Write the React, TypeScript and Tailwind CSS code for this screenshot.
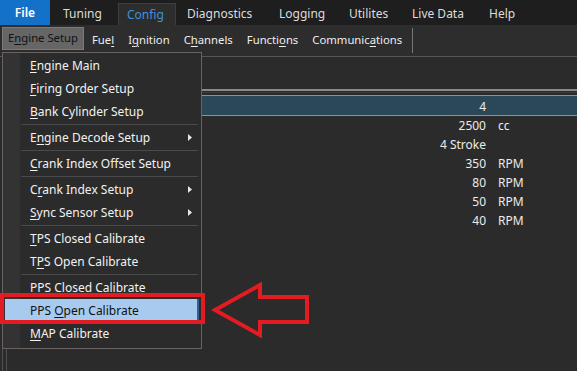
import React from 'react';

type MenuEntry =
  | { kind: 'item'; pre: string; key: string; post: string; sub?: boolean; active?: boolean }
  | { kind: 'sep' };

const menuEntries: MenuEntry[] = [
  { kind: 'item', pre: '', key: 'E', post: 'ngine Main' },
  { kind: 'item', pre: '', key: 'F', post: 'iring Order Setup' },
  { kind: 'item', pre: '', key: 'B', post: 'ank Cylinder Setup' },
  { kind: 'sep' },
  { kind: 'item', pre: 'E', key: 'n', post: 'gine Decode Setup', sub: true },
  { kind: 'sep' },
  { kind: 'item', pre: '', key: 'C', post: 'rank Index Offset Setup' },
  { kind: 'sep' },
  { kind: 'item', pre: 'C', key: 'r', post: 'ank Index Setup', sub: true },
  { kind: 'item', pre: '', key: 'S', post: 'ync Sensor Setup', sub: true },
  { kind: 'sep' },
  { kind: 'item', pre: '', key: 'T', post: 'PS Closed Calibrate' },
  { kind: 'item', pre: 'T', key: 'P', post: 'S Open Calibrate' },
  { kind: 'sep' },
  { kind: 'item', pre: 'PPS C', key: 'l', post: 'osed Calibrate' },
  { kind: 'item', pre: 'PPS ', key: 'O', post: 'pen Calibrate', active: true },
  { kind: 'item', pre: '', key: 'M', post: 'AP Calibrate' },
];

const topMenu = [
  { label: 'Tuning', cls: 'w-[68px] pl-[13px]' },
  { label: 'Config', cls: 'w-[58px] pl-[8px]', active: true },
  { label: 'Diagnostics', cls: 'w-[92px] pl-[11px]' },
  { label: 'Logging', cls: 'w-[70px] pl-[11px]' },
  { label: 'Utilites', cls: 'w-[63px] pl-[11px]' },
  { label: 'Live Data', cls: 'w-[77px] pl-[11px]' },
  { label: 'Help', cls: 'w-[60px] pl-[11px]' },
];

const subMenu = [
  { pre: 'E', key: 'n', post: 'gine Setup', active: true },
  { pre: 'Fue', key: 'l', post: '' },
  { pre: 'I', key: 'g', post: 'nition' },
  { pre: 'C', key: 'h', post: 'annels' },
  { pre: 'Functi', key: 'o', post: 'ns' },
  { pre: 'Communic', key: 'a', post: 'tions' },
];

const rows = [
  { value: '2500', unit: 'cc' },
  { value: '4 Stroke', unit: '' },
  { value: '350', unit: 'RPM' },
  { value: '80', unit: 'RPM' },
  { value: '50', unit: 'RPM' },
  { value: '40', unit: 'RPM' },
];

function Mnemonic({ pre, k, post }: { pre: string; k: string; post: string }) {
  return (
    <span>
      {pre}
      <span className="underline underline-offset-2 decoration-1">{k}</span>
      {post}
    </span>
  );
}

function EngineMenu() {
  return (
    <div className="absolute left-[2px] top-[52px] w-[200px] h-[297px] bg-[#2b2b2b] border border-[#6a6363] pt-[1px]">
      <div className="absolute left-0 top-0 bottom-0 w-[17px] bg-[#333333]" />
      <div className="relative flex flex-col">
        {menuEntries.map((e, i) =>
          e.kind === 'sep' ? (
            <div key={i} className="h-[3px] flex items-center pl-[18px] pr-[3px]">
              <div className="h-px w-full bg-[#4a4a4a]" />
            </div>
          ) : (
            <div
              key={i}
              className={
                'h-[23px] flex items-center pl-[25px] pr-[8px] mx-[2px] ' +
                (e.active ? 'bg-[#a8caee] text-[#111111] border-r-2 border-[#3b5f8c]' : 'text-[#f2f2f2]')
              }
            >
              <span className="flex-1 leading-none">
                <Mnemonic pre={e.pre} k={e.key} post={e.post} />
              </span>
              {e.sub && (
                <svg width="4" height="7" viewBox="0 0 4 7" className="mr-[-1px]">
                  <polygon points="0,0 4,3.5 0,7" fill="#e6e6e6" />
                </svg>
              )}
            </div>
          )
        )}
      </div>
    </div>
  );
}

export default function App() {
  return (
    <div
      className="relative w-[577px] h-[371px] overflow-hidden bg-[#2b2b2b] text-[12px] flex flex-col"
      style={{ fontFamily: '"Segoe UI", "Noto Sans", sans-serif' }}
    >
      {/* top menu */}
      <div className="h-[25px] bg-[#1e1e1e] flex items-stretch text-[#dcdcdc]">
        <div className="w-[50px] bg-[#1471c9] text-white font-semibold flex items-center justify-center">File</div>
        {topMenu.map((m) => (
          <div key={m.label} className={m.cls + ' flex items-center pt-[2px]'}>
            {m.active ? (
              <div className="-ml-[8px] h-[22px] mt-[1px] w-[58px] pl-[8px] flex items-center bg-[#2d2d2d] border border-b-0 border-[#3e3e3e] text-[#3d93db]">
                {m.label}
              </div>
            ) : (
              m.label
            )}
          </div>
        ))}
      </div>

      {/* config sub bar */}
      <div className="h-[32px] bg-[#2d2d2d] border-b border-[#555555] flex items-center pl-[2px] text-[#eeeeee] text-[11.3px]">
        {subMenu.map((s) => (
          <div
            key={s.pre + s.key}
            className={
              'flex items-center ' +
              (s.active
                ? 'self-start mt-[2px] h-[23px] px-[5px] mr-[1px] bg-[#666666] border border-[#7a7a7a] text-[#111111]'
                : 'h-[24px] px-[7px]')
            }
          >
            <Mnemonic pre={s.pre} k={s.key} post={s.post} />
          </div>
        ))}
        <div className="ml-[3px] w-px h-[25px] bg-[#777777]" />
      </div>

      {/* content */}
      <div className="flex-1 flex">
        <div className="ml-[2px] w-[5px] border-x border-[#4f4f4f]" />
        <div className="flex-1 flex flex-col pt-[32px] text-[#ececec]">
          <div className="h-[2px] bg-[#8a8a8a]" />
          <div className="h-px mt-[1px] bg-[#3c3c3c]" />
          <div className="h-[21px] mt-[2px] bg-[#2a4858] border-y border-[#4aa5d9] flex items-center pt-[2px]">
            <div className="flex-1 text-right">4</div>
            <div className="w-[91px]" />
          </div>
          {rows.map((r) => (
            <div key={r.value} className="h-[19px] flex items-center">
              <div className="flex-1 text-right">{r.value}</div>
              <div className="w-[91px] pl-[12px]">{r.unit}</div>
            </div>
          ))}
        </div>
      </div>

      <EngineMenu />

      {/* annotation */}
      <div className="absolute left-0 top-[293px] w-[205px] h-[31px] border-[4px] border-[#e31b23]" />
      <svg className="absolute left-0 top-0" width="577" height="371" viewBox="0 0 577 371">
        <polygon
          points="215,310 260,285 260,297 307,297 307,322 260,322 260,335"
          fill="none"
          stroke="#e31b23"
          strokeWidth="4"
          strokeLinejoin="miter"
        />
      </svg>
    </div>
  );
}
